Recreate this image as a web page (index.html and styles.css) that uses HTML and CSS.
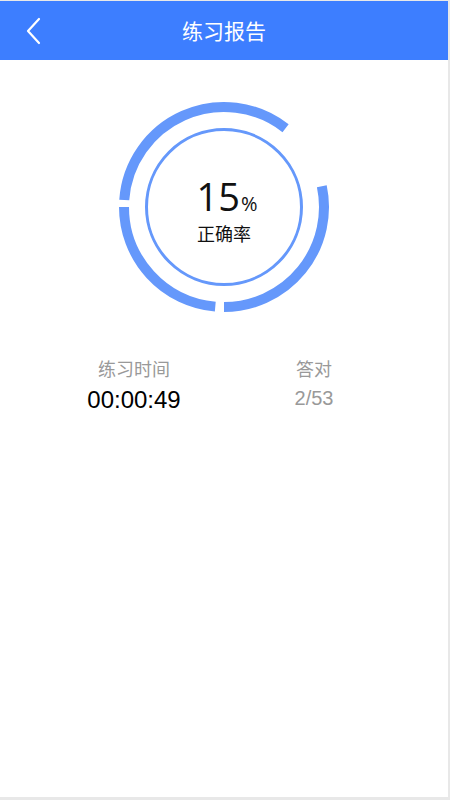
FILE: index.html
```html
<!DOCTYPE html>
<html lang="zh">
<head>
<meta charset="utf-8">
<title>练习报告</title>
<link rel="stylesheet" href="styles.css">
</head>
<body>
<div class="page">
  <header class="topbar">
    <span class="back">
      <svg width="20" height="30" viewBox="0 0 20 30"><polyline points="14,2 3,14 14,26" fill="none" stroke="#fff" stroke-width="2.2" stroke-linecap="round" stroke-linejoin="round"/></svg>
    </span>
    <h1 class="title">练习报告</h1>
  </header>

  <section class="chart">
    <svg class="ring" width="214" height="214" viewBox="0 0 214 214">
      <g fill="none" stroke="#6598fb" stroke-width="10">
        <path d="M204.81 86.21 A100 100 0 0 1 107 207"/>
        <path d="M98.28 206.62 A100 100 0 0 1 7 107"/>
        <path d="M7.24 100.02 A100 100 0 0 1 168.57 28.20"/>
      </g>
      <circle cx="107" cy="107" r="77.5" fill="none" stroke="#6598fb" stroke-width="3"/>
    </svg>
    <div class="center">
      <div class="pct"><span class="num">15</span><span class="sign">%</span></div>
      <div class="label">正确率</div>
    </div>
  </section>

  <section class="stats">
    <div class="stat">
      <div class="stat-title">练习时间</div>
      <div class="stat-value dark">00:00:49</div>
    </div>
    <div class="stat">
      <div class="stat-title">答对</div>
      <div class="stat-value">2/53</div>
    </div>
  </section>
</div>
</body>
</html>
```

FILE: styles.css
```css
html, body {
  margin: 0;
  padding: 0;
}
body {
  background: #e8e8e8;
  width: 450px;
  height: 800px;
  overflow: hidden;
  font-family: "Noto Sans CJK SC", "Noto Sans", sans-serif;
}
.page {
  width: 448px;
  height: 796px;
  margin-top: 1px;
  background: #fff;
}
.topbar {
  height: 59px;
  background: #3d7eff;
  display: flex;
  align-items: center;
  justify-content: center;
  position: relative;
}
.back {
  position: absolute;
  left: 25px;
  top: 16px;
  width: 20px;
  height: 30px;
}
.back svg { display: block; }
.title {
  margin: 0;
  color: #fff;
  font-size: 21px;
  font-weight: 400;
  line-height: 1;
}
.chart {
  position: relative;
  width: 214px;
  height: 214px;
  margin: 40px auto 0;
}
.ring {
  display: block;
}
.center {
  position: absolute;
  inset: 0;
  display: flex;
  flex-direction: column;
  align-items: center;
  justify-content: center;
  padding-top: 4px;
}
.pct {
  display: flex;
  align-items: baseline;
  line-height: 1;
  color: #111;
  margin-left: 6px;
}
.num {
  font-family: "Open Sans", "Noto Sans", sans-serif;
  font-size: 38px;
  font-weight: 400;
}
.sign {
  font-family: "Open Sans", "Noto Sans", sans-serif;
  font-size: 20px;
  margin-left: 1px;
}
.label {
  font-size: 18px;
  color: #111;
  line-height: 1;
  margin-top: 9px;
}
.stats {
  display: flex;
  padding: 0 44px;
  margin-top: 42px;
}
.stat {
  width: 180px;
  display: flex;
  flex-direction: column;
  align-items: center;
}
.stat-title {
  font-size: 18px;
  color: #999;
  line-height: 24px;
}
.stat-value {
  font-family: "Liberation Sans", "Noto Sans", sans-serif;
  font-size: 20px;
  color: #999;
  line-height: 28px;
  margin-top: 4px;
}
.stat-value.dark {
  color: #000;
  font-size: 24px;
  margin-top: 6px;
}
```
